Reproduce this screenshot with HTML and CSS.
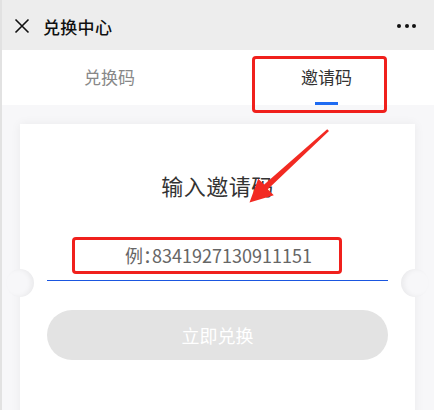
FILE: index.html
```html
<!DOCTYPE html>
<html lang="zh-CN">
<head>
<meta charset="utf-8">
<title>兑换中心</title>
<link rel="stylesheet" href="styles.css">
</head>
<body>
<div class="page">
  <header class="topbar">
    <div class="topbar-left">
      <svg class="close-icon" width="16" height="16" viewBox="0 0 16 16"><path d="M1.5 1.5 L14.5 14.5 M14.5 1.5 L1.5 14.5" stroke="#111" stroke-width="1.6" fill="none"/></svg>
      <span class="topbar-title">兑换中心</span>
    </div>
    <div class="more"><i></i><i></i><i></i></div>
  </header>
  <nav class="tabs">
    <div class="tab">兑换码</div>
    <div class="tab active">邀请码</div>
  </nav>
  <main class="content">
    <section class="card">
      <span class="notch notch-left"></span>
      <span class="notch notch-right"></span>
      <h2 class="card-title">输入邀请码</h2>
      <div class="field">
        <input class="code-input" type="text" placeholder="例：8341927130911151">
      </div>
      <button class="submit" type="button">立即兑换</button>
    </section>
  </main>
  <div class="mark mark-tab"></div>
  <div class="mark mark-input"></div>
  <svg class="arrow" width="434" height="410" viewBox="0 0 434 410">
    <polygon points="327.2,129.2 264.2,184.6 258.2,178.8 249.5,202.5 273.8,195.2 267.8,189.2 329,130.9" fill="#f22a22"/>
  </svg>
</div>
</body>
</html>
```

FILE: styles.css
```css
* { box-sizing: border-box; }
html, body { margin: 0; padding: 0; }
body {
  width: 434px;
  height: 410px;
  overflow: hidden;
  background: #f7f7f9;
  font-family: "Noto Sans CJK SC", "Noto Sans", sans-serif;
}
.page {
  position: relative;
  height: 410px;
  border-left: 2px solid #e2e2e2;
}
.topbar {
  height: 50px;
  background: #ededed;
  display: flex;
  align-items: center;
  justify-content: space-between;
  padding: 2px 18px 0 12px;
}
.topbar-left { display: flex; align-items: center; }
.close-icon { display: block; margin-right: 13px; }
.topbar-title {
  font-size: 17px;
  font-weight: 500;
  color: #111;
  letter-spacing: 0.3px;
}
.more { display: flex; gap: 3.5px; }
.more i {
  display: block;
  width: 4px;
  height: 4px;
  border-radius: 50%;
  background: #111;
}
.tabs {
  height: 55px;
  background: #fff;
  display: flex;
}
.tab {
  flex: 1;
  display: flex;
  align-items: center;
  justify-content: center;
  font-size: 17px;
  color: #888;
  position: relative;
  padding-bottom: 2px;
}
.tab:first-child { padding-right: 2px; }
.tab.active { color: #333; }
.tab.active::after {
  content: "";
  position: absolute;
  bottom: 0;
  left: 50%;
  width: 23px;
  height: 3px;
  margin-left: -12px;
  background: #1e6bf2;
}
.content {
  padding: 19px 19px 0 18px;
}
.card {
  position: relative;
  background: #fff;
  box-shadow: 0 0 10px rgba(0, 0, 0, 0.06);
  padding: 46px 27px 60px;
  text-align: center;
}
.notch {
  position: absolute;
  top: 145px;
  width: 28px;
  height: 28px;
  border-radius: 50%;
  background: #f7f7f9;
}
.notch-left { left: -14px; box-shadow: inset -3px 0 5px rgba(0, 0, 0, 0.05); }
.notch-right { right: -14px; box-shadow: inset 3px 0 5px rgba(0, 0, 0, 0.05); }
.card-title {
  margin: 0;
  font-size: 22px;
  line-height: 30px;
  font-weight: 400;
  color: #333;
  letter-spacing: 0.5px;
}
.field {
  margin-top: 30px;
  border-bottom: 1px solid #1a56e0;
}
.code-input {
  display: block;
  width: 100%;
  height: 50px;
  border: 0;
  outline: 0;
  background: transparent;
  text-align: center;
  font-family: "Noto Sans CJK SC", "Noto Sans", sans-serif;
  font-feature-settings: "halt" 1;
  font-size: 18px;
  color: #333;
  padding: 0 0 0 2px;
}
.code-input::placeholder { color: #666; }
.submit {
  display: block;
  width: 100%;
  height: 50px;
  margin-top: 29px;
  border: 0;
  border-radius: 25px;
  background: #e3e3e3;
  color: #fff;
  font-family: "Noto Sans CJK SC", "Noto Sans", sans-serif;
  font-size: 18px;
}
.mark {
  position: absolute;
  border: 3px solid #f0201c;
  border-radius: 4px;
}
.mark-tab { left: 250px; top: 56px; width: 135px; height: 57px; }
.mark-input { left: 70px; top: 237px; width: 270px; height: 37px; }
.arrow { position: absolute; left: -2px; top: 0; pointer-events: none; }
```
